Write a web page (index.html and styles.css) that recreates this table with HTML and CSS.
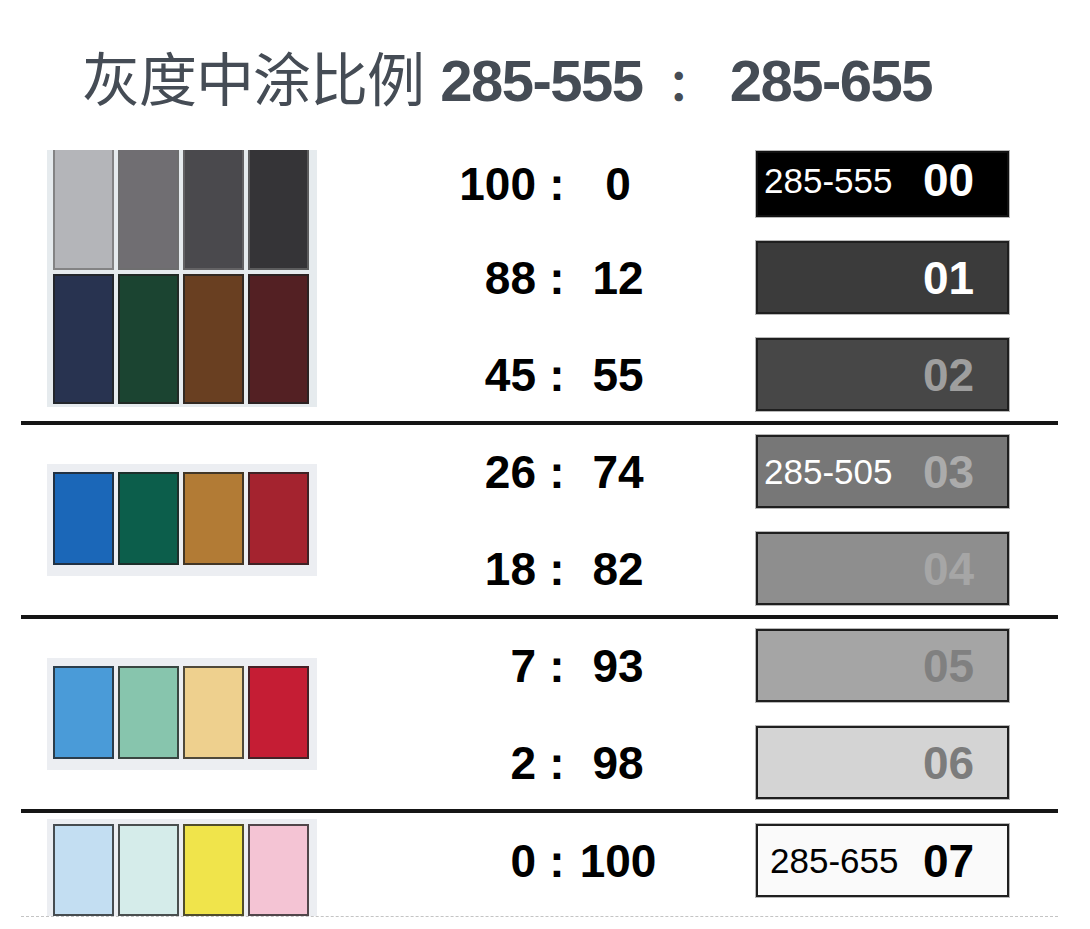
FILE: index.html
```html
<!DOCTYPE html>
<html lang="zh">
<head>
<meta charset="utf-8">
<title>灰度中涂比例</title>
<link rel="stylesheet" href="styles.css">
</head>
<body>
<div class="page">
  <h1 class="title"><span class="title-cjk">灰度中涂比例</span> <span class="title-num">285-555</span> <span class="title-colon">：</span> <span class="title-num">285-655</span></h1>

  <div class="table">
    <section class="group">
      <div class="swatch-cell">
        <div class="panel panel--double">
          <div class="swatch swatch--light" style="background:#b4b5b9"></div>
          <div class="swatch swatch--light" style="background:#706e72"></div>
          <div class="swatch swatch--light" style="background:#4a494d"></div>
          <div class="swatch swatch--light" style="background:#353437"></div>
          <div class="swatch" style="background:#283350"></div>
          <div class="swatch" style="background:#1b4431"></div>
          <div class="swatch" style="background:#693f21"></div>
          <div class="swatch" style="background:#532023"></div>
        </div>
      </div>
      <div class="rows rows--first">
        <div class="row row--cut">
          <span class="n-left">100</span><span class="sep">:</span><span class="n-right">0</span>
          <div class="box box--00"><span class="box-label">285-555</span><span class="box-code">00</span></div>
        </div>
        <div class="row">
          <span class="n-left">88</span><span class="sep">:</span><span class="n-right">12</span>
          <div class="box box--01"><span class="box-label"></span><span class="box-code">01</span></div>
        </div>
        <div class="row">
          <span class="n-left">45</span><span class="sep">:</span><span class="n-right">55</span>
          <div class="box box--02"><span class="box-label"></span><span class="box-code">02</span></div>
        </div>
      </div>
    </section>

    <section class="group group--ruled">
      <div class="swatch-cell">
        <div class="panel panel--single">
          <div class="swatch" style="background:#1b67b8"></div>
          <div class="swatch" style="background:#0c5e4b"></div>
          <div class="swatch" style="background:#b27b35"></div>
          <div class="swatch" style="background:#a4232f"></div>
        </div>
      </div>
      <div class="rows">
        <div class="row">
          <span class="n-left">26</span><span class="sep">:</span><span class="n-right">74</span>
          <div class="box box--03"><span class="box-label">285-505</span><span class="box-code">03</span></div>
        </div>
        <div class="row">
          <span class="n-left">18</span><span class="sep">:</span><span class="n-right">82</span>
          <div class="box box--04"><span class="box-label"></span><span class="box-code">04</span></div>
        </div>
      </div>
    </section>

    <section class="group group--ruled">
      <div class="swatch-cell">
        <div class="panel panel--single">
          <div class="swatch" style="background:#4a9bd8"></div>
          <div class="swatch" style="background:#87c5ad"></div>
          <div class="swatch" style="background:#eed08e"></div>
          <div class="swatch" style="background:#c51d34"></div>
        </div>
      </div>
      <div class="rows">
        <div class="row">
          <span class="n-left">7</span><span class="sep">:</span><span class="n-right">93</span>
          <div class="box box--05"><span class="box-label"></span><span class="box-code">05</span></div>
        </div>
        <div class="row">
          <span class="n-left">2</span><span class="sep">:</span><span class="n-right">98</span>
          <div class="box box--06"><span class="box-label"></span><span class="box-code">06</span></div>
        </div>
      </div>
    </section>

    <section class="group group--ruled group--last">
      <div class="swatch-cell">
        <div class="panel panel--bottom">
          <div class="swatch" style="background:#c3def2"></div>
          <div class="swatch" style="background:#d5ecea"></div>
          <div class="swatch" style="background:#f0e44b"></div>
          <div class="swatch" style="background:#f4c4d4"></div>
        </div>
      </div>
      <div class="rows rows--last">
        <div class="row">
          <span class="n-left">0</span><span class="sep">:</span><span class="n-right">100</span>
          <div class="box box--07"><span class="box-label">285-655</span><span class="box-code">07</span></div>
        </div>
      </div>
    </section>
  </div>
</div>
</body>
</html>
```

FILE: styles.css
```css
* { box-sizing: border-box; }

body {
  margin: 0;
  background: #ffffff;
  font-family: "Liberation Sans", Arial, "Noto Sans CJK SC", sans-serif;
  color: #000;
}

.page {
  width: 1090px;
  height: 929px;
  overflow: hidden;
}

/* ---------- title ---------- */
.title {
  margin: 0;
  height: 150px;
  padding: 41px 0 0 82px;
  font-size: 58px;
  line-height: 70px;
  font-weight: 400;
  color: #454c55;
  white-space: nowrap;
}
.title-cjk {
  font-family: "Noto Sans CJK SC", sans-serif;
  font-weight: 400;
  letter-spacing: -1px;
}
.title-num {
  font-weight: 700;
  letter-spacing: -1.5px;
}
.title-colon {
  font-family: "Noto Sans CJK TC", sans-serif;
  font-weight: 700;
  font-size: 44px;
  margin-left: 9px;
  margin-right: 2px;
}

/* ---------- table ---------- */
.table {
  margin-left: 21px;
  width: 1037px;
}

.group { display: flex; }
.group--ruled { border-top: 4px solid #151515; }
.group--last { border-bottom: 1px dashed #c4c4c4; }

.swatch-cell {
  width: 420px;
  display: flex;
}

.panel {
  margin-left: 26px;
  width: 270px;
  background: #eceef2;
  display: grid;
  grid-template-columns: repeat(4, 61px);
  gap: 4px;
  align-self: center;
  padding: 7px 9px 12px 6px;
  grid-auto-rows: 93px;
}
.panel--double {
  align-self: flex-start;
  padding: 0 9px 3px 6px;
  grid-template-rows: 120px 130px;
  background: #e6ebee;
}
.panel--single { padding: 8px 9px 11px 6px; }
.panel--bottom {
  align-self: flex-end;
  padding: 5px 9px 0 6px;
  grid-auto-rows: 92px;
}

.swatch {
  border: 2px solid rgba(35, 35, 35, 0.78);
}
.swatch--light {
  border-color: rgba(110, 110, 110, 0.7);
  border-top-width: 0;
}

/* ---------- ratio rows ---------- */
.rows {
  display: flex;
  flex-direction: column;
  gap: 24px;
  padding: 10px 0;
}
.rows--first { padding: 1px 0 10px; }
.rows--last { padding: 11px 0 19px; }

.row {
  display: grid;
  grid-template-columns: 95px 42px 80px auto;
  align-items: center;
  height: 73px;
  font-weight: 700;
  font-size: 46px;
  line-height: 1;
}
.row--cut { height: 66px; }

.n-left { text-align: right; }
.sep { text-align: center; }
.n-right { text-align: center; }

.box {
  margin-left: 98px;
  width: 253px;
  height: 73px;
  display: flex;
  align-items: center;
  padding-left: 6px;
  border: 2px solid #1f1f1f;
  box-shadow: 0 0 0 1px #b8b8b8;
}
.row--cut .box {
  height: 66px;
  padding-bottom: 8px;
}

.box-label {
  width: 159px;
  font-size: 35px;
  font-weight: 400;
  line-height: 1;
}
.box-code {
  font-size: 46px;
  font-weight: 700;
  line-height: 1;
}

.box--00 { background: #000; color: #fff; border-color: #111; }
.box--01 { background: #3b3b3b; color: #fff; }
.box--02 { background: #474747; color: #9e9e9e; }
.box--03 { background: #777777; color: #ababab; }
.box--03 .box-label { color: #fff; }
.box--04 { background: #8e8e8e; color: #a6a6a6; }
.box--05 { background: #a5a5a5; color: #808080; }
.box--06 { background: #d4d4d4; color: #7c7c7c; }
.box--07 { background: #fafafa; color: #000; }
.box--07 .box-label { padding-left: 6px; }
```
